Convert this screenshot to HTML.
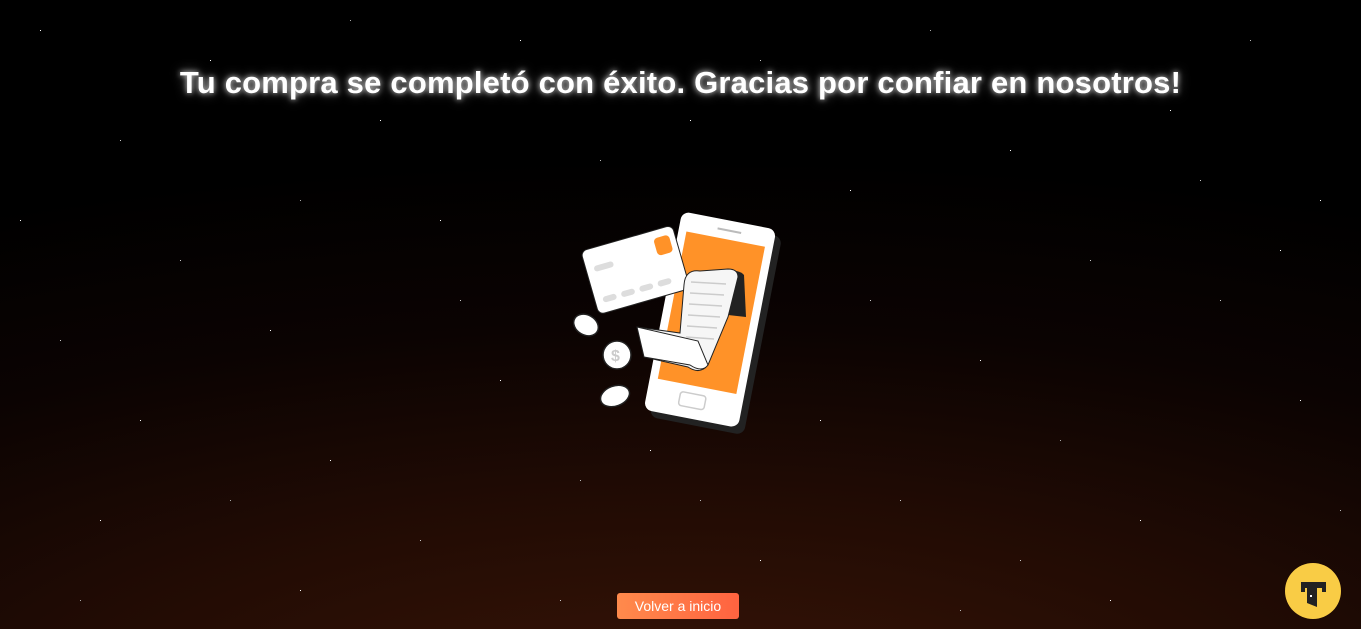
<!DOCTYPE html>
<html><head><meta charset="utf-8"><style>
html,body{margin:0;padding:0}
body{width:1361px;height:629px;overflow:hidden;position:relative;font-family:"Liberation Sans",sans-serif;
background:radial-gradient(ellipse 120% 90% at 50% 115%,#3a1507 0%,#210b04 40%,#0b0302 70%,#000 100%);}
h1{position:absolute;top:65px;left:0;width:1361px;text-align:center;margin:0;color:#fff;font-size:31px;font-weight:bold;
text-shadow:0 0 6px rgba(255,255,255,.8),0 0 12px rgba(255,255,255,.4);letter-spacing:0.2px}
.stars{position:absolute;left:0;top:0;width:1px;height:1px;background:transparent;
box-shadow:40px 30px #fff,120px 140px #ccc,210px 60px #fff,300px 200px #aaa,380px 120px #fff,460px 300px #ccc,520px 40px #fff,600px 160px #bbb,690px 120px #fff,760px 60px #ccc,850px 190px #fff,930px 30px #aaa,1010px 150px #fff,1090px 260px #ccc,1170px 110px #fff,1250px 40px #bbb,1320px 200px #fff,60px 340px #ccc,140px 420px #fff,230px 500px #aaa,330px 460px #fff,420px 540px #ccc,500px 380px #fff,580px 480px #bbb,820px 420px #fff,900px 500px #ccc,980px 360px #fff,1060px 440px #aaa,1140px 520px #fff,1220px 300px #ccc,1300px 400px #fff,1340px 510px #bbb,100px 520px #fff,180px 260px #ccc,270px 330px #fff,350px 20px #aaa,440px 220px #fff,1020px 560px #ccc,1110px 600px #fff,960px 610px #bbb,760px 560px #fff,560px 600px #ccc,300px 590px #fff,80px 600px #aaa,20px 220px #fff,1200px 180px #ccc,1280px 250px #fff,700px 500px #bbb,650px 450px #fff,870px 300px #ccc;}
.btn{position:absolute;left:617px;top:593px;width:122px;height:26px;border-radius:3px;
background:linear-gradient(90deg,#ff8a4c,#ff6340);color:#fff;font-size:14px;text-align:center;line-height:26px}
.logo{position:absolute;left:1285px;top:563px;width:56px;height:56px;border-radius:50%;background:#f9cc45}
</style></head><body>
<div class="stars"></div>
<h1>Tu compra se completó con éxito. Gracias por confiar en nosotros!</h1>
<svg style="position:absolute;left:560px;top:205px" width="240" height="230" viewBox="0 0 240 230">
<g transform="translate(2 5) rotate(11 150 110)">
<rect x="107" y="15" width="96" height="202" rx="8" fill="#222"/>
<rect x="100" y="9" width="96" height="202" rx="8" fill="#fff"/>
<rect x="108" y="28" width="80" height="150" fill="#ff9228"/>
<rect x="138" y="18" width="24" height="2" fill="#bbb"/>
<rect x="133" y="186" width="26" height="14" rx="3" fill="none" stroke="#ccc" stroke-width="1.5"/>
</g>
<g transform="rotate(-16 75 65)">
<rect x="28" y="32" width="95" height="66" rx="6" fill="#fff" stroke="#222" stroke-width="1"/>
<rect x="101" y="40" width="16" height="18" rx="4" fill="#ff9228"/>
<rect x="36" y="50" width="20" height="6" rx="3" fill="#ddd"/>
<rect x="36" y="82" width="14" height="6" rx="3" fill="#ddd"/><rect x="55" y="82" width="14" height="6" rx="3" fill="#ddd"/><rect x="74" y="82" width="14" height="6" rx="3" fill="#ddd"/><rect x="93" y="82" width="14" height="6" rx="3" fill="#ddd"/>
</g>
<path d="M140 66 Q178 62 184 70 L186 112 L168 110 Z" fill="#222"/>
<path d="M140 66 Q125 64 124 80 L120 128 L77 122 L84 152 L128 162 Q140 170 148 160 L168 112 L178 72 Q178 64 168 64 Z" fill="#f6f6f6" stroke="#222" stroke-width="1"/>
<path d="M77 122 L84 152 L130 160 Q142 168 148 160 L138 136 Z" fill="#fff" stroke="#222" stroke-width="1"/>
<g stroke="#ccc" stroke-width="1.5"><line x1="131" y1="77" x2="166" y2="79"/><line x1="130" y1="88" x2="164" y2="90"/><line x1="129" y1="99" x2="162" y2="101"/><line x1="128" y1="110" x2="160" y2="112"/><line x1="127" y1="121" x2="157" y2="123"/><line x1="126" y1="132" x2="154" y2="134"/></g>
<g fill="#fff" stroke="#222" stroke-width="1.5">
<ellipse cx="26" cy="120" rx="13" ry="10" transform="rotate(30 26 120)"/>
<circle cx="57" cy="150" r="14"/>
<ellipse cx="55" cy="191" rx="15" ry="10" transform="rotate(-20 55 191)"/>
</g>
<text x="51" y="156" font-size="16" fill="#ccc" font-family="Liberation Sans" font-weight="bold">$</text>
</svg>
<div class="btn">Volver a inicio</div>
<div class="logo"><svg width="56" height="56" viewBox="0 0 56 56"><path d="M16 19 H41 V29 H37 V25 H32 V44 L22 40 V25 H20 V29 H16 Z" fill="#222"/><rect x="25" y="32" width="2" height="2" fill="#fff"/></svg></div>
</body></html>
